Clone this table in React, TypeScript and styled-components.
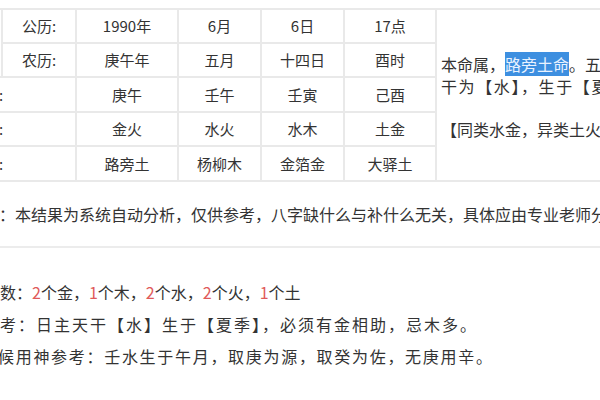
import React from "react";
import styled, { createGlobalStyle } from "styled-components";

const Global = createGlobalStyle`
  html, body { margin: 0; padding: 0; background: #ffffff; }
  body { font-family: "Noto Sans CJK SC", "Liberation Sans", sans-serif; color: #333333; }
`;

const Frame = styled.div`
  width: 600px;
  height: 400px;
  overflow: hidden;
  background: #ffffff;
`;

const Sheet = styled.div`
  margin-left: -40px;
  width: 800px;
  padding-top: 8px;
`;

const Grid = styled.table`
  border-collapse: collapse;
  table-layout: fixed;
  width: 800px;
  font-size: 15px;
  color: #333333;
`;

const Row = styled.tr<{ $h?: number }>`
  height: ${(p) => p.$h ?? 34}px;
`;

const Cell = styled.td<{ $align?: "left" | "center"; $pad?: number }>`
  border: 2px solid #e9e9e9;
  padding: 0 0 0 ${(p) => p.$pad ?? 0}px;
  text-align: ${(p) => p.$align ?? "center"};
  vertical-align: middle;
  white-space: nowrap;
  line-height: 20px;
`;

const InfoCell = styled.td`
  border: 2px solid #e9e9e9;
  border-right: none;
  padding: 4px 0 0 4px;
  vertical-align: middle;
  text-align: left;
  font-size: 16px;
`;

const InfoLine = styled.div<{ $spacing?: number }>`
  height: 21.5px;
  line-height: 21.5px;
  white-space: nowrap;
  letter-spacing: ${(p) => p.$spacing ?? 0}px;
`;

const Sel = styled.span`
  background: #3d8fe0;
  color: #e9f2ff;
`;

const Note = styled.div`
  height: 64px;
  border-bottom: 2px solid #ececec;
  display: flex;
  align-items: center;
  padding-left: 23px;
  font-size: 16px;
  white-space: nowrap;
  color: #333333;
`;

const Stats = styled.div`
  margin-top: 28px;
  margin-left: 40px;
  display: flex;
  flex-direction: column;
`;

const StatLine = styled.div<{ $spacing?: number; $shift?: number }>`
  height: 32px;
  line-height: 32px;
  font-size: 16px;
  white-space: nowrap;
  letter-spacing: ${(p) => p.$spacing ?? 0}px;
  margin-left: ${(p) => p.$shift ?? 0}px;
  color: #333333;
`;

const Num = styled.span`
  color: #e05a5a;
`;

const rows = [
  { h: 35, cells: ["庚午", "壬午", "壬寅", "己酉"] },
  { h: 34, cells: ["金火", "水火", "水木", "土金"] },
  { h: 35, cells: ["路旁土", "杨柳木", "金箔金", "大驿土"] },
];
const labels = ["八字:", "五行:", "纳音:"];

export default function App() {
  return (
    <>
      <Global />
      <Frame>
        <Sheet>
          <Grid>
            <colgroup>
              <col style={{ width: 41 }} />
              <col style={{ width: 74 }} />
              <col style={{ width: 102 }} />
              <col style={{ width: 83 }} />
              <col style={{ width: 83 }} />
              <col style={{ width: 92 }} />
              <col />
            </colgroup>
            <tbody>
              <Row>
                <Cell rowSpan={2}>出生</Cell>
                <Cell>公历:</Cell>
                <Cell>1990年</Cell>
                <Cell>6月</Cell>
                <Cell>6日</Cell>
                <Cell>17点</Cell>
                <InfoCell rowSpan={5}>
                  <InfoLine>
                    本命属，<Sel>路旁土命</Sel>。五行旺水，日主天
                  </InfoLine>
                  <InfoLine $spacing={1.6}>干为【水】，生于【夏季】。</InfoLine>
                  <InfoLine />
                  <InfoLine>【同类水金，异类土火木】</InfoLine>
                </InfoCell>
              </Row>
              <Row>
                <Cell>农历:</Cell>
                <Cell>庚午年</Cell>
                <Cell>五月</Cell>
                <Cell>十四日</Cell>
                <Cell>酉时</Cell>
              </Row>
              {rows.map((r, i) => (
                <Row key={i} $h={r.h}>
                  <Cell colSpan={2} $align="left" $pad={7}>
                    {labels[i]}
                  </Cell>
                  {r.cells.map((c) => (
                    <Cell key={c}>{c}</Cell>
                  ))}
                </Row>
              ))}
            </tbody>
          </Grid>
          <Note>
            注：本结果为系统自动分析，仅供参考，八字缺什么与补什么无关，具体应由专业老师分析。
          </Note>
          <Stats>
            <StatLine>
              数：<Num>2</Num>个金，<Num>1</Num>个木，<Num>2</Num>个水，<Num>2</Num>个火，<Num>1</Num>个土
            </StatLine>
            <StatLine $spacing={2}>
              考：日主天干【水】生于【夏季】，必须有金相助，忌木多。
            </StatLine>
            <StatLine $spacing={1.7} $shift={-2}>
              候用神参考：壬水生于午月，取庚为源，取癸为佐，无庚用辛。
            </StatLine>
          </Stats>
        </Sheet>
      </Frame>
    </>
  );
}
